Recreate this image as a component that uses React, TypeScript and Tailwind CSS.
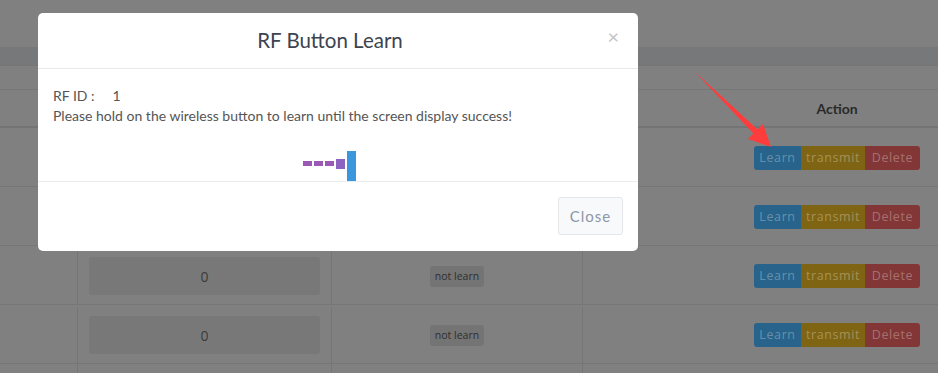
import React from "react";

const rows = [0, 0, 0, 0];

function ActionButtons() {
  return (
    <div className="flex h-[24px] overflow-hidden rounded-[3px] text-[12.5px] tracking-[0.6px] text-white/30">
      <span className="flex w-[47px] items-center justify-center bg-[#27638a]">Learn</span>
      <span className="flex w-[64px] items-center justify-center bg-[#7e6413]">transmit</span>
      <span className="flex w-[55px] items-center justify-center bg-[#823636]">Delete</span>
    </div>
  );
}

function LearnAnimation() {
  return (
    <div className="flex items-start justify-center gap-[2px] pr-[17px]">
      <span className="mt-[10px] h-[5px] w-[9px] bg-[#9b59b6]" />
      <span className="mt-[10px] h-[5px] w-[9px] bg-[#9b59b6]" />
      <span className="mt-[10px] h-[5px] w-[9px] bg-[#9b59b6]" />
      <span className="mt-[8px] h-[10px] w-[9px] bg-[#8e62c0]" />
      <span className="h-[30px] w-[9px] bg-[#3a97de]" />
    </div>
  );
}

export default function App() {
  return (
    <div className="relative h-[373px] w-[938px] overflow-hidden bg-[#808080] font-['Open_Sans',sans-serif]">
      {/* dimmed page behind the dialog */}
      <div className="flex w-[1091px] flex-col">
        <div className="h-[47px]" />
        <div className="h-[18px] bg-[#77787a]" />
        <div className="h-[25px] border-y border-[#767676]" />
        <div className="grid h-[38px] grid-cols-[78px_254px_251px_508px] border-b-2 border-[#747474] text-[14px] font-bold text-[#2a2a2a] font-['Lato',sans-serif]">
          <div />
          <div />
          <div />
          <div className="flex items-center justify-center">Action</div>
        </div>
        {rows.map((v, i) => (
          <div
            key={i}
            className="grid h-[59px] grid-cols-[78px_254px_251px_508px] border-b border-[#767676] pt-[2px]"
          >
            <div className="border-r border-[#767676]" />
            <div className="flex items-center border-r border-[#767676] px-[11px]">
              {i > 1 && (
                <div className="flex h-[38px] w-full items-center justify-center rounded-[3px] bg-[#787878] text-[14px] text-[#3b3b3b]">
                  {v}
                </div>
              )}
            </div>
            <div className="flex items-center justify-center border-r border-[#767676]">
              {i > 1 && (
                <span className="rounded-[3px] bg-[#747474] px-[5px] py-[3px] text-[10.5px] leading-[15px] text-[#2f2f2f]">
                  not learn
                </span>
              )}
            </div>
            <div className="flex items-center justify-center">
              <ActionButtons />
            </div>
          </div>
        ))}
        <div className="grid h-[59px] grid-cols-[78px_254px_251px_508px]">
          <div className="border-r border-[#767676]" />
          <div className="border-r border-[#767676]" />
          <div className="border-r border-[#767676]" />
          <div />
        </div>
      </div>

      {/* dialog */}
      <div className="absolute left-[38px] top-[13px] flex w-[600px] flex-col rounded-[5px] bg-white font-['Lato',sans-serif]">
        <div className="relative flex h-[56px] items-center justify-center border-b border-[#e9e9e9] pr-[16px]">
          <h2 className="text-[20.5px] text-[#3d4350]">RF Button Learn</h2>
          <span className="absolute right-[19px] top-[13px] text-[20px] leading-[20px] text-[#c4c4c4]">×</span>
        </div>
        <div className="flex h-[113px] flex-col border-b border-[#ececec] px-[15px] pt-[17px] text-[14px] leading-[20px] text-[#555]">
          <p>
            RF ID :<span className="ml-[18px]">1</span>
          </p>
          <p>Please hold on the wireless button to learn until the screen display success!</p>
          <div className="mt-auto">
            <LearnAnimation />
          </div>
        </div>
        <div className="flex h-[69px] items-start justify-end px-[15px] pt-[15px]">
          <button className="h-[38px] w-[65px] rounded-[3px] border border-[#e4e6ea] bg-[#f8f9fb] text-[15px] tracking-[1px] text-[#8d96a7]">
            Close
          </button>
        </div>
      </div>

      {/* annotation arrow */}
      <svg className="pointer-events-none absolute inset-0 h-full w-full" viewBox="0 0 938 373">
        <polygon
          points="694,71 757.6,129.4 763,124 771,147 748,139 753.4,133.6"
          fill="#ff3c3c"
        />
      </svg>
    </div>
  );
}
